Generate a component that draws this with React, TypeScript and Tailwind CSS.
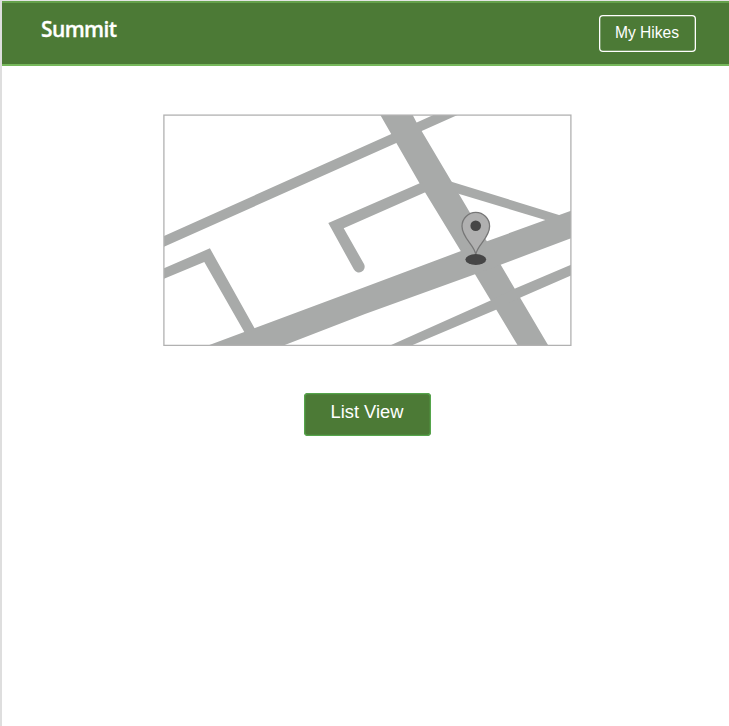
function TrailMap() {
  return (
    <svg viewBox="163 114 409 232" className="block h-[232px] w-[409px]" role="img">
      <g fill="#a8aaa9">
        <path d="M164 236 391.3 134 433.3 115H457.5L421.7 131 396.3 143 164 246.7Z" />
        <path d="M380.3 115H412.7L416.3 122 451.7 181.7 548.3 345.5H517.8L475 274.3 419.5 183.3Z" />
        <path d="M449 181 559 215 571 219 545.3 220 456 193Z" />
        <path d="M571 210.7 487.7 241 365 287 254.3 328.3 208 345.5H283.5L365 314 475 274.3 571 238.3Z" />
        <path d="M164 268.3 209.9 248.3 255 329 246 335 204.3 262 164 278.8Z" />
        <path d="M422 182.3 328.3 223 353.8 269.3A5.7 5.7 0 0 0 364 264L343.7 228.3 427 191.6Z" />
        <path d="M571 264.7 515.7 288.3 490 300.7 390 345.5H411.5L496 309.7 521.7 297 571 275.5Z" />
      </g>
      <path
        d="M475.8 254.5C474.5 245 462 238 462 226.2A13.8 13.8 0 0 1 489.6 226.2C489.6 238 477 245 475.8 254.5Z"
        fill="#b0b0b0"
        stroke="#777777"
        strokeWidth="1.3"
      />
      <circle cx="475.7" cy="225.7" r="5.3" fill="#464646" />
      <ellipse cx="475.8" cy="259.5" rx="10.4" ry="5.4" fill="#464646" />
      <rect x="163.9" y="115.1" width="407" height="230.3" fill="none" stroke="#b1b1b1" strokeWidth="1.3" />
    </svg>
  );
}

export default function App() {
  return (
    <div className="flex h-[726px] w-[729px] flex-col overflow-hidden border-l-2 border-t border-l-[#dedede] border-t-[#e4e4e4] bg-white font-['Liberation_Sans',Arial,sans-serif]">
      <header className="flex h-[65px] shrink-0 items-start justify-between border-t-2 border-b-2 border-t-[#65a14c] border-b-[#76b85b] bg-[#4c7a36] pl-[39px] pr-[33px] text-white">
        <h1 className="mt-[11px] font-['Open_Sans',sans-serif] text-[21px] leading-[30px] font-semibold tracking-[-0.6px] [-webkit-text-stroke:0.3px_white]">
          Summit
        </h1>
        <button className="mt-[11px] h-[38px] w-[98px] rounded-[5px] p-[0.5px]">
          <span className="flex h-full w-full items-center justify-center rounded-[4px] pb-px text-[15.6px] shadow-[inset_0_0_0_1.3px_white]">
            My Hikes
          </span>
        </button>
      </header>
      <main className="flex flex-col items-center pt-12 pl-[3px]">
        <TrailMap />
        <button className="mt-[46px] flex h-[44px] w-[128px] items-center justify-center rounded-[5px] p-[0.5px] text-white">
          <span className="flex h-full w-full items-center justify-center rounded-[4px] bg-[#4c7a36] pb-[4px] text-[18.3px] shadow-[inset_0_0_0_1.3px_#55a54b]">
            List View
          </span>
        </button>
      </main>
    </div>
  );
}
